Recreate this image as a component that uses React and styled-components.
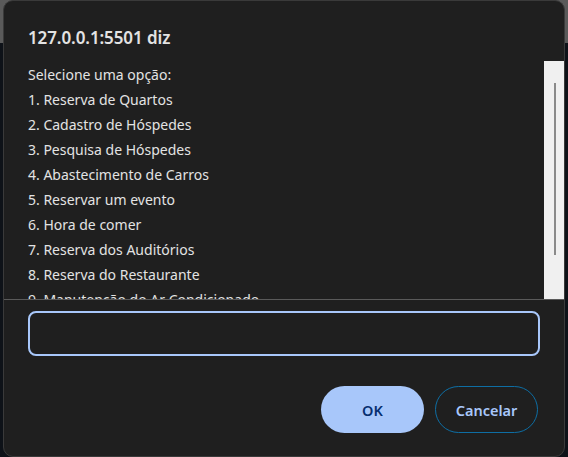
import React from "react";
import styled, { createGlobalStyle } from "styled-components";

const Global = createGlobalStyle`
  html, body { margin: 0; padding: 0; }
  body {
    width: 568px;
    height: 457px;
    overflow: hidden;
    background: #0e1218;
    font-family: "Noto Sans", "Open Sans", sans-serif;
  }
`;

const Page = styled.div`
  position: relative;
  width: 568px;
  height: 457px;
  display: flex;
  flex-direction: column;
`;

const TopBar = styled.div`
  height: 43px;
  background: #5a5a5a;
`;

const PageRest = styled.div`
  flex: 1;
  background: #0e1218;
`;

const Dialog = styled.div`
  position: absolute;
  left: 3px;
  top: 0;
  width: 562px;
  height: 457px;
  box-sizing: border-box;
  background: #1f1f1f;
  border: 1px solid #3a3a3a;
  border-radius: 10px;
  display: flex;
  flex-direction: column;
  overflow: hidden;
`;

const Title = styled.div`
  padding: 25px 24px 0 24px;
  font-size: 17px;
  line-height: 24px;
  font-weight: 600;
  color: #e3e3e3;
  letter-spacing: -0.1px;
`;

const MessageRow = styled.div`
  margin-top: 11px;
  height: 239px;
  box-sizing: border-box;
  border-bottom: 1px solid #5a5a5a;
  display: flex;
`;

const MessageText = styled.div`
  flex: 1;
  overflow: hidden;
  padding: 1px 24px 0 24px;
  font-size: 14px;
  line-height: 25px;
  color: #e3e3e3;
`;

const Line = styled.div`
  white-space: nowrap;
`;

const ScrollTrack = styled.div`
  width: 20px;
  background: #f0f0f0;
  display: flex;
  justify-content: center;
  padding-top: 22px;
  box-sizing: border-box;
`;

const ScrollThumb = styled.div`
  width: 2px;
  height: 172px;
  margin-left: 1px;
  background: #8a8a8a;
`;

const InputBox = styled.div`
  margin: 11px 24px 0 24px;
  height: 45px;
  box-sizing: border-box;
  border: 2px solid #a8c7fa;
  border-radius: 8px;
  background: #1f1f1f;
`;

const ButtonRow = styled.div`
  margin-top: 30px;
  padding-right: 26px;
  display: flex;
  justify-content: flex-end;
  gap: 11px;
`;

const Button = styled.div`
  width: 103px;
  height: 47px;
  box-sizing: border-box;
  border-radius: 24px;
  display: flex;
  align-items: center;
  justify-content: center;
  font-size: 14.5px;
  font-weight: 600;
  background: ${(p) => (p.$primary ? "#a8c7fa" : "transparent")};
  color: ${(p) => (p.$primary ? "#062e6f" : "#a8c7fa")};
  border: ${(p) => (p.$primary ? "none" : "1px solid #0e6ea4")};
`;

const lines = [
  "Selecione uma opção:",
  "1. Reserva de Quartos",
  "2. Cadastro de Hóspedes",
  "3. Pesquisa de Hóspedes",
  "4. Abastecimento de Carros",
  "5. Reservar um evento",
  "6. Hora de comer",
  "7. Reserva dos Auditórios",
  "8. Reserva do Restaurante",
  "9. Manutenção do Ar Condicionado",
];

export default function App() {
  return (
    <>
      <Global />
      <Page>
        <TopBar />
        <PageRest />
        <Dialog>
          <Title>127.0.0.1:5501 diz</Title>
          <MessageRow>
            <MessageText>
              {lines.map((l) => (
                <Line key={l}>{l}</Line>
              ))}
            </MessageText>
            <ScrollTrack>
              <ScrollThumb />
            </ScrollTrack>
          </MessageRow>
          <InputBox />
          <ButtonRow>
            <Button $primary>OK</Button>
            <Button>Cancelar</Button>
          </ButtonRow>
        </Dialog>
      </Page>
    </>
  );
}
